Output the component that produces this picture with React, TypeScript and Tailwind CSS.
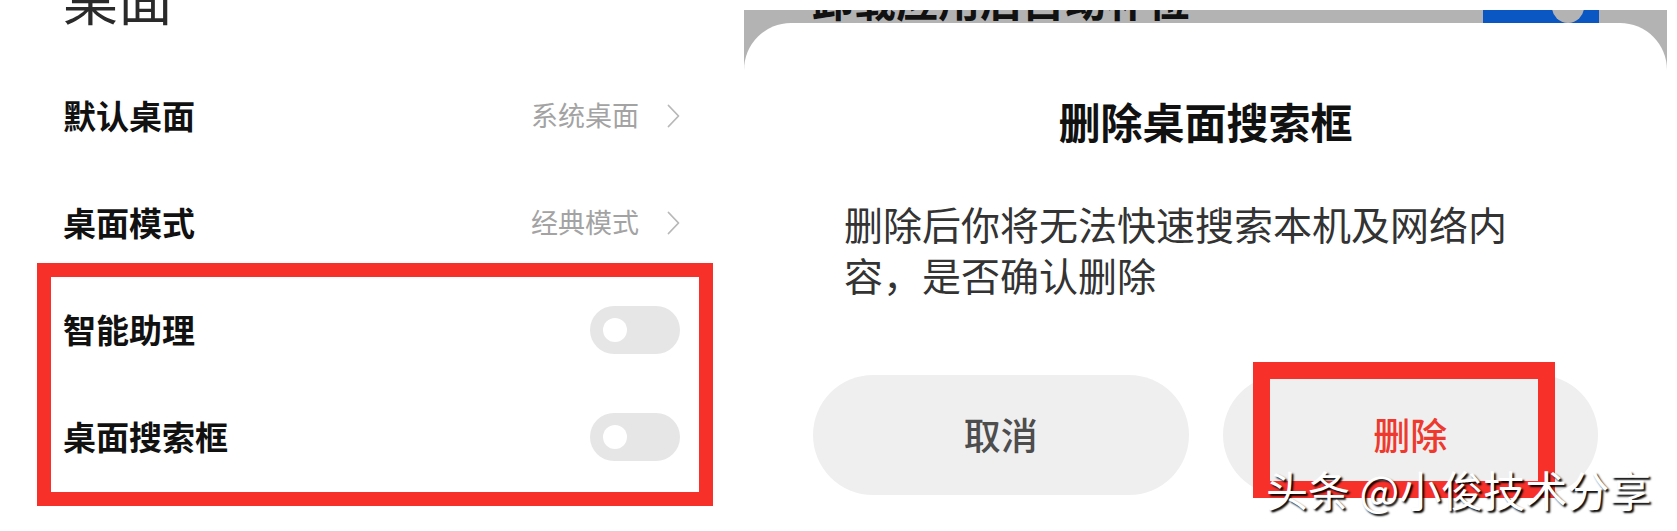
import React from "react";

// settings rows on the left screen
const linkRows = [
  { label: "默认桌面", value: "系统桌面" },
  { label: "桌面模式", value: "经典模式" },
];
const switchRows = ["智能助理", "桌面搜索框"];

function Chevron() {
  return (
    <svg width="13" height="24" viewBox="0 0 13 24" fill="none">
      <polyline points="1.5,1.5 11.5,12 1.5,22.5" stroke="#b8b8b8" strokeWidth="1.8" strokeLinecap="round" strokeLinejoin="round" />
    </svg>
  );
}

function Toggle() {
  return (
    <div className="flex h-[48px] w-[90px] items-center rounded-full bg-[#e6e6e6] pl-[13px]">
      <div className="h-[24px] w-[24px] rounded-full bg-white" />
    </div>
  );
}

export default function App() {
  return (
    <div className="relative flex h-[531px] w-[1677px] overflow-hidden bg-white font-['Noto_Sans_CJK_SC','Noto_Sans',sans-serif]">
      {/* left screen */}
      <div className="flex w-[744px] shrink-0 flex-col pl-[63px] pr-[64px]">
        <div className="h-[62px] overflow-hidden">
          <div className="mt-[-31px] text-[55px] leading-none font-normal text-[#2a2a2a]">桌面</div>
        </div>
        {linkRows.map((r) => (
          <div key={r.label} className="flex h-[107px] items-center justify-between">
            <span className="text-[33px] font-bold text-[#111]">{r.label}</span>
            <div className="flex items-center gap-[28px]">
              <span className="text-[27px] text-[#a3a3a3]">{r.value}</span>
              <Chevron />
            </div>
          </div>
        ))}
        {switchRows.map((label) => (
          <div key={label} className="flex h-[107px] items-center justify-between">
            <span className="text-[33px] font-bold text-[#111]">{label}</span>
            <Toggle />
          </div>
        ))}
      </div>

      {/* right screen with dialog */}
      <div className="flex w-[923px] shrink-0 flex-col pt-[10px]">
        <div className="flex flex-1 flex-col bg-[#b3b3b3]">
          <div className="flex h-[13px] items-start justify-between overflow-hidden pl-[68px] pr-[68px]">
            <div className="mt-[-32px] text-[42px] leading-none font-bold text-[#111]">卸载应用后自动补位</div>
            <div className="relative h-[13px] w-[116px] bg-[#0a56c2]">
              <div className="absolute left-[69px] top-[-19px] h-[32px] w-[32px] rounded-full bg-[#b3b3b3]" />
            </div>
          </div>
          <div className="flex flex-1 flex-col rounded-t-[47px] bg-white">
            <div className="pt-[70px] text-center text-[42px] leading-[56px] font-bold text-[#111]">删除桌面搜索框</div>
            <p className="mt-[49px] pl-[100px] pr-[133px] text-[39px] leading-[51px] text-[#333]">
              删除后你将无法快速搜索本机及网络内容，是否确认删除
            </p>
            <div className="mt-[75px] flex gap-[34px] px-[69px]">
              <button className="flex h-[120px] flex-1 items-center justify-center rounded-full bg-[#efefef] text-[37px] font-medium text-[#4d4d4d]">
                取消
              </button>
              <button className="flex h-[120px] flex-1 items-center justify-center rounded-full bg-[#efefef] text-[37px] font-medium text-[#ee3a2e]">
                删除
              </button>
            </div>
          </div>
        </div>
      </div>
      <div className="w-[10px] shrink-0" />

      {/* annotations drawn over the screenshots */}
      <div className="absolute left-[37px] top-[263px] h-[243px] w-[676px] border-[14px] border-[#f7302a]" />
      <div className="absolute left-[1253px] top-[362px] h-[136px] w-[302px] border-[17px] border-[#f7302a]" />
      <div className="absolute left-[1266px] top-[468px] text-[42px] leading-none whitespace-nowrap text-white [text-shadow:2px_2px_2px_#000]">
        头条 @小俊技术分享
      </div>
    </div>
  );
}
